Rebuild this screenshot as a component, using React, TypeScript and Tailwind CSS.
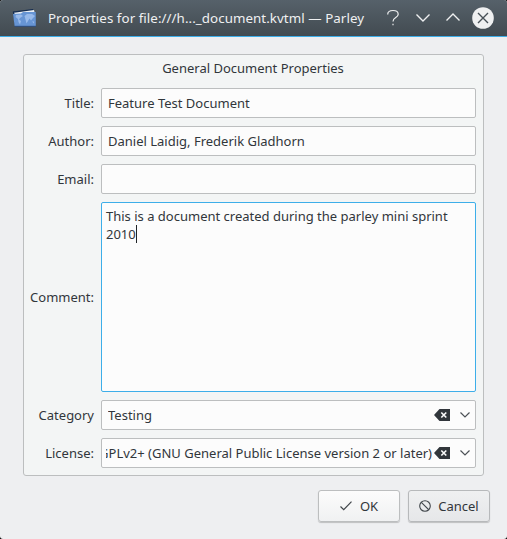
import type { ReactNode } from "react";

const fieldBox = "rounded-[2px] border border-[#bcbebf] bg-[#fcfcfc]";

function WindowIcon() {
  return (
    <svg width="26" height="20" viewBox="0 0 26 20" className="shrink-0">
      <path d="M0.8 3.5 L21 1 L22 5 L3 18 Z" fill="#142c50" />
      <path d="M2 4.8 L22 2 L23 6 L4 8 Z" fill="#e9eef4" />
      <path d="M1 6 L9 5.5 L11 4 H23.8 V18 H2.6 Z" fill="#6795d4" />
      <path d="M2.6 18.3 H24" stroke="#2e4f84" />
      <path d="M4 7 L9 6.5 L11 8 L8 10 L7 11.5 L9 13 L8 16.5 L6.5 14 L6 11 L3.5 9 Z M12.5 8 L15 6 L20 6 L23 8 L21 10 L19 12.5 L17.5 10.5 L16 13 L14.5 15.5 L13.5 11.5 Z M20 13.5 L22 13.5 L22 15.5 Z" fill="#98baea" />
    </svg>
  );
}

function TitleBar() {
  return (
    <header className="flex h-[37px] items-center border-b border-[#3daee9] bg-linear-to-b from-[#56616a] to-[#424b51] pl-3">
      <WindowIcon />
      <h1 className="ml-[10px] w-[317px] whitespace-nowrap text-[13.33px] leading-[18px] font-normal tracking-[0.06px] text-[#eff0f1]">
        Properties for file:///h..._document.kvtml — Parley
      </h1>
      <div className="ml-[18px] flex items-center">
        <svg width="20" height="22" viewBox="0 0 20 22" fill="none" stroke="#eff0f1" strokeWidth="1.2">
          <path d="M4.7 7.5 C4.7 4.4 7 3.5 10 3.5 C13.5 3.5 15.2 5 15.2 7.2 C15.2 11 10 10 10 14.5 M10 16.7 V18.3" />
        </svg>
        <svg width="20" height="22" viewBox="0 0 20 22" className="ml-[10px]" fill="none" stroke="#eff0f1" strokeWidth="1.4">
          <path d="M3.5 7.5 L10 14 L16.5 7.5" />
        </svg>
        <svg width="20" height="22" viewBox="0 0 20 22" className="ml-[10px]" fill="none" stroke="#eff0f1" strokeWidth="1.4">
          <path d="M3.5 13.5 L10 7 L16.5 13.5" />
        </svg>
        <svg width="22" height="22" viewBox="0 0 22 22" className="ml-[9px]">
          <circle cx="11" cy="11" r="10.8" fill="#eff0f1" />
          <path d="M6 6 L16 16 M16 6 L6 16" stroke="#475057" strokeWidth="1.4" />
        </svg>
      </div>
    </header>
  );
}

function Label({ children }: { children: ReactNode }) {
  return <label className="self-center text-right whitespace-nowrap">{children}</label>;
}

function TextField({ value }: { value: string }) {
  return <div className={`${fieldBox} flex h-[30px] items-center px-[6px]`}>{value}</div>;
}

function ComboIcons() {
  return (
    <div className="flex shrink-0 items-center">
      <svg width="16" height="12" viewBox="0 0 16 12">
        <path d="M0 6 L5.5 0 H16 V12 H5.5 Z" fill="#31363b" />
        <path d="M7.3 3.5 L12.3 8.5 M12.3 3.5 L7.3 8.5" stroke="#fcfcfc" strokeWidth="1.6" />
      </svg>
      <svg width="12" height="8" viewBox="0 0 12 8" className="ml-[9px]" fill="none" stroke="#4d5257" strokeWidth="1.2">
        <path d="M1.5 1.5 L6 6 L10.5 1.5" />
      </svg>
    </div>
  );
}

function Combo({ value, clipped }: { value: string; clipped?: boolean }) {
  return (
    <div className={`${fieldBox} flex h-[30px] items-center pr-[4px] ${clipped ? "pl-1" : "pl-[6px]"}`}>
      <div className={`flex min-w-0 flex-1 overflow-hidden whitespace-nowrap ${clipped ? "justify-end pr-[2px]" : ""}`}>
        <span>{value}</span>
      </div>
      <ComboIcons />
    </div>
  );
}

export default function App() {
  return (
    <div className="bg-black font-['Noto_Sans',sans-serif] text-[13px] leading-[18px] text-[#31363b]">
      <div className="flex h-[539px] w-[507px] flex-col overflow-hidden rounded-[3px] bg-[#eeeff1]">
        <TitleBar />
        <main className="flex flex-1 flex-col px-[17px] pt-[17px]">
          <section className="ml-[6px] h-[422px] w-[461px] rounded-[3px] border border-[#bcbebf] bg-[#f3f5f5] pr-[7px] pt-[4px]">
            <h2 className="ml-[6px] mb-[11px] text-center font-normal">General Document Properties</h2>
            <div className="grid grid-cols-[70px_375px] gap-x-[7px] gap-y-2">
              <Label>Title:</Label>
              <TextField value="Feature Test Document" />
              <Label>Author:</Label>
              <TextField value="Daniel Laidig, Frederik Gladhorn" />
              <Label>Email:</Label>
              <TextField value="" />
              <Label>Comment:</Label>
              <div className="h-[190px] rounded-[2px] border border-[#3daee9] bg-[#fcfcfc] px-1 pt-[4px]">
                This is a document created during the parley mini sprint
                <br />
                2010
                <span className="inline-block h-[18px] w-px bg-[#202428] align-top" />
              </div>
              <Label>Category</Label>
              <Combo value="Testing" />
              <Label>License:</Label>
              <Combo value="GPLv2+ (GNU General Public License version 2 or later)" clipped />
            </div>
          </section>
          <footer className="mt-[14px] flex justify-end gap-2">
            <button className="flex h-8 w-[82px] items-center justify-center gap-2 rounded-[3px] border border-[#bcbebf] bg-linear-to-b from-[#fcfcfc] to-[#f0f1f2] shadow-[0_1px_1px_rgba(0,0,0,0.2)]">
              <svg width="12" height="10" viewBox="0 0 12 10" fill="none" stroke="#41464b" strokeWidth="1.2">
                <path d="M0.5 5.5 L3.7 8.7 L11.5 0.7" />
              </svg>
              OK
            </button>
            <button className="flex h-8 w-[82px] items-center justify-center gap-[7px] rounded-[3px] border border-[#b7b9bb] bg-linear-to-b from-[#eff0f1] to-[#e6e7e9] shadow-[0_1px_1px_rgba(0,0,0,0.2)]">
              <svg width="12" height="12" viewBox="0 0 12 12" fill="none" stroke="#41464b" strokeWidth="1.1">
                <circle cx="6" cy="6" r="5.3" />
                <path d="M2.3 2.3 L9.7 9.7" />
              </svg>
              Cancel
            </button>
          </footer>
        </main>
      </div>
    </div>
  );
}
